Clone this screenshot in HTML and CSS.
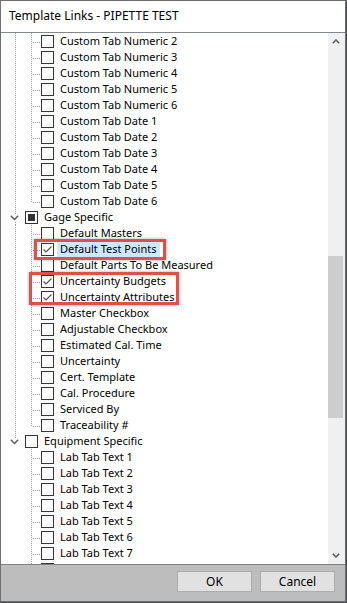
FILE: index.html
```html
<!DOCTYPE html>
<html lang="en">
<head>
    <meta charset="UTF-8">
    <title>Template Links - PIPETTE TEST</title>
    <link rel="stylesheet" href="styles.css">
</head>
<body>
    <div class="window">
        <div class="title">Template Links - PIPETTE TEST</div>

        <div class="tree-pane">
            <div class="tree">
                <div class="row"><span class="rail line"></span><span class="branch"></span><span class="box"></span><span class="label">Custom Tab Numeric 2</span></div>
                <div class="row"><span class="rail line"></span><span class="branch"></span><span class="box"></span><span class="label">Custom Tab Numeric 3</span></div>
                <div class="row"><span class="rail line"></span><span class="branch"></span><span class="box"></span><span class="label">Custom Tab Numeric 4</span></div>
                <div class="row"><span class="rail line"></span><span class="branch"></span><span class="box"></span><span class="label">Custom Tab Numeric 5</span></div>
                <div class="row"><span class="rail line"></span><span class="branch"></span><span class="box"></span><span class="label">Custom Tab Numeric 6</span></div>
                <div class="row"><span class="rail line"></span><span class="branch"></span><span class="box"></span><span class="label">Custom Tab Date 1</span></div>
                <div class="row"><span class="rail line"></span><span class="branch"></span><span class="box"></span><span class="label">Custom Tab Date 2</span></div>
                <div class="row"><span class="rail line"></span><span class="branch"></span><span class="box"></span><span class="label">Custom Tab Date 3</span></div>
                <div class="row"><span class="rail line"></span><span class="branch"></span><span class="box"></span><span class="label">Custom Tab Date 4</span></div>
                <div class="row"><span class="rail line"></span><span class="branch"></span><span class="box"></span><span class="label">Custom Tab Date 5</span></div>
                <div class="row"><span class="rail line"></span><span class="branch last"></span><span class="box"></span><span class="label">Custom Tab Date 6</span></div>

                <div class="row group">
                    <span class="toggle">
                        <svg width="9" height="6" viewBox="0 0 9 6"><polyline points="0.8,0.8 4.5,4.5 8.2,0.8" fill="none" stroke="#5a5a5a" stroke-width="1.4"/></svg>
                    </span>
                    <span class="box partial"></span><span class="label group-label">Gage Specific</span>
                </div>
                <div class="row"><span class="rail line"></span><span class="branch"></span><span class="box"></span><span class="label">Default Masters</span></div>
                <div class="row"><span class="rail line"></span><span class="branch"></span><span class="box checked"><svg width="11" height="11" viewBox="0 0 11 11"><polyline points="1.5,5.5 4,8 9.5,2.5" fill="none" stroke="#4f4f4f" stroke-width="1.1"/></svg></span><span class="label selected">Default Test Points</span></div>
                <div class="row"><span class="rail line"></span><span class="branch"></span><span class="box"></span><span class="label">Default Parts To Be Measured</span></div>
                <div class="row"><span class="rail line"></span><span class="branch"></span><span class="box checked"><svg width="11" height="11" viewBox="0 0 11 11"><polyline points="1.5,5.5 4,8 9.5,2.5" fill="none" stroke="#4f4f4f" stroke-width="1.1"/></svg></span><span class="label">Uncertainty Budgets</span></div>
                <div class="row"><span class="rail line"></span><span class="branch"></span><span class="box checked"><svg width="11" height="11" viewBox="0 0 11 11"><polyline points="1.5,5.5 4,8 9.5,2.5" fill="none" stroke="#4f4f4f" stroke-width="1.1"/></svg></span><span class="label">Uncertainty Attributes</span></div>
                <div class="row"><span class="rail line"></span><span class="branch"></span><span class="box"></span><span class="label">Master Checkbox</span></div>
                <div class="row"><span class="rail line"></span><span class="branch"></span><span class="box"></span><span class="label">Adjustable Checkbox</span></div>
                <div class="row"><span class="rail line"></span><span class="branch"></span><span class="box"></span><span class="label">Estimated Cal. Time</span></div>
                <div class="row"><span class="rail line"></span><span class="branch"></span><span class="box"></span><span class="label">Uncertainty</span></div>
                <div class="row"><span class="rail line"></span><span class="branch"></span><span class="box"></span><span class="label">Cert. Template</span></div>
                <div class="row"><span class="rail line"></span><span class="branch"></span><span class="box"></span><span class="label">Cal. Procedure</span></div>
                <div class="row"><span class="rail line"></span><span class="branch"></span><span class="box"></span><span class="label">Serviced By</span></div>
                <div class="row"><span class="rail line"></span><span class="branch last"></span><span class="box"></span><span class="label">Traceability #</span></div>

                <div class="row group">
                    <span class="toggle last">
                        <svg width="9" height="6" viewBox="0 0 9 6"><polyline points="0.8,0.8 4.5,4.5 8.2,0.8" fill="none" stroke="#5a5a5a" stroke-width="1.4"/></svg>
                    </span>
                    <span class="box"></span><span class="label group-label">Equipment Specific</span>
                </div>
                <div class="row"><span class="rail"></span><span class="branch"></span><span class="box"></span><span class="label">Lab Tab Text 1</span></div>
                <div class="row"><span class="rail"></span><span class="branch"></span><span class="box"></span><span class="label">Lab Tab Text 2</span></div>
                <div class="row"><span class="rail"></span><span class="branch"></span><span class="box"></span><span class="label">Lab Tab Text 3</span></div>
                <div class="row"><span class="rail"></span><span class="branch"></span><span class="box"></span><span class="label">Lab Tab Text 4</span></div>
                <div class="row"><span class="rail"></span><span class="branch"></span><span class="box"></span><span class="label">Lab Tab Text 5</span></div>
                <div class="row"><span class="rail"></span><span class="branch"></span><span class="box"></span><span class="label">Lab Tab Text 6</span></div>
                <div class="row"><span class="rail"></span><span class="branch"></span><span class="box"></span><span class="label">Lab Tab Text 7</span></div>
                <div class="row"><span class="rail"></span><span class="branch"></span><span class="box"></span></div>
            </div>

            <div class="scrollbar">
                <div class="arrow">
                    <svg width="8" height="5" viewBox="0 0 8 5"><polyline points="0.8,4.2 4,1 7.2,4.2" fill="none" stroke="#606060" stroke-width="1.6"/></svg>
                </div>
                <div class="track"><div class="thumb"></div></div>
                <div class="arrow">
                    <svg width="8" height="5" viewBox="0 0 8 5"><polyline points="0.8,0.8 4,4 7.2,0.8" fill="none" stroke="#606060" stroke-width="1.6"/></svg>
                </div>
            </div>

            <!-- annotation boxes drawn over the tree -->
            <div class="mark mark-one"></div>
            <div class="mark mark-two"></div>
        </div>

        <div class="footer">
            <button class="btn">OK</button>
            <button class="btn">Cancel</button>
        </div>
    </div>
</body>
</html>
```

FILE: styles.css
```css
* {
    margin: 0;
    padding: 0;
    box-sizing: border-box;
}

body {
    background: #4b4f55;
    font-family: "Noto Sans", "Liberation Sans", sans-serif;
    font-size: 12px;
    color: #000;
}

.window {
    width: 346px;
    height: 602px;
    background: #fff;
    border: 1px solid #6e6e6e;
    display: flex;
    flex-direction: column;
}

.title {
    height: 31px;
    line-height: 30px;
    padding-left: 8px;
    font-size: 12px;
    flex: none;
}

.tree-pane {
    position: relative;
    height: 533px;
    border-top: 1px solid #828790;
    border-bottom: 1px solid #828282;
    display: flex;
    flex: none;
}

.tree {
    flex: 1;
    overflow: hidden;
    font-size: 11px;
}

.row {
    display: flex;
    align-items: flex-start;
    height: 16px;
    white-space: nowrap;
}

.rail {
    width: 15px;
    height: 16px;
    flex: none;
}

.rail.line {
    background: repeating-linear-gradient(to bottom, #9a9a9a 0 1px, transparent 1px 2px) 14px 0 / 1px 16px no-repeat;
}

.branch {
    width: 25px;
    height: 16px;
    flex: none;
    background:
        repeating-linear-gradient(to bottom, #9a9a9a 0 1px, transparent 1px 2px) 15px 0 / 1px 16px no-repeat,
        repeating-linear-gradient(to right, #9a9a9a 0 1px, transparent 1px 2px) 17px 9px / 8px 1px no-repeat;
}

.branch.last {
    background:
        repeating-linear-gradient(to bottom, #9a9a9a 0 1px, transparent 1px 2px) 15px 0 / 1px 9px no-repeat,
        repeating-linear-gradient(to right, #9a9a9a 0 1px, transparent 1px 2px) 17px 9px / 8px 1px no-repeat;
}

.toggle {
    width: 24px;
    height: 16px;
    flex: none;
    display: flex;
    padding: 6px 0 0 9px;
    background:
        repeating-linear-gradient(to bottom, #9a9a9a 0 1px, transparent 1px 2px) 14px 0 / 1px 5px no-repeat,
        repeating-linear-gradient(to bottom, #9a9a9a 0 1px, transparent 1px 2px) 14px 13px / 1px 3px no-repeat;
}

.toggle.last {
    background: repeating-linear-gradient(to bottom, #9a9a9a 0 1px, transparent 1px 2px) 14px 0 / 1px 5px no-repeat;
}

.toggle svg {
    display: block;
}

.box {
    width: 13px;
    height: 13px;
    margin-top: 2px;
    flex: none;
    border: 1px solid #333;
    background: #fff;
    display: flex;
    align-items: center;
    justify-content: center;
}

.box.partial::before {
    content: "";
    width: 7px;
    height: 7px;
    background: #333;
}

.label {
    margin-left: 3px;
    padding: 0 3px;
    line-height: 15px;
    height: 16px;
}

.label.selected {
    background: #cce8ff;
}

.scrollbar {
    width: 17px;
    flex: none;
    background: #f0f0f0;
    display: flex;
    flex-direction: column;
}

.arrow {
    height: 17px;
    display: flex;
    align-items: center;
    padding-left: 4px;
    flex: none;
}

.track {
    flex: 1;
    padding-top: 206px;
}

.thumb {
    width: 15px;
    height: 162px;
    background: #cdcdcd;
}

.mark {
    position: absolute;
    border: 3px solid #e24f4a;
    box-shadow: 0 0 3px rgba(0, 0, 0, 0.35);
}

.mark-one {
    left: 33px;
    top: 206px;
    width: 132px;
    height: 21px;
}

.mark-two {
    left: 28px;
    top: 239px;
    width: 150px;
    height: 33px;
}

.footer {
    flex: 1;
    background: #bdbdbd;
    display: flex;
    justify-content: flex-end;
    align-items: flex-start;
    gap: 8px;
    padding: 6px 10px 0 0;
}

.btn {
    width: 75px;
    height: 21px;
    background: #e1e1e1;
    border: 1px solid #adadad;
    font-family: inherit;
    font-size: 12px;
    color: #000;
}
```
